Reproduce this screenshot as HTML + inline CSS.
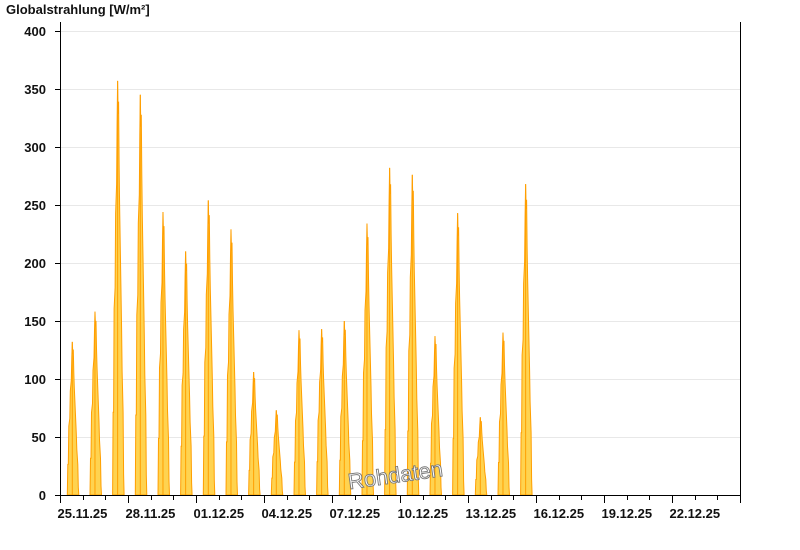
<!DOCTYPE html>
<html><head><meta charset="utf-8"><style>
body{margin:0;width:800px;height:550px;background:#fff;overflow:hidden}
svg{display:block;font-family:"Liberation Sans",Arial,sans-serif}
</style></head><body>
<svg id="s" width="800" height="550" xmlns="http://www.w3.org/2000/svg">
<text x="6" y="14" font-size="13" font-weight="bold" fill="#111">Globalstrahlung [W/m²]</text>
<g id="grid"></g>
<g id="bars"></g>
<line x1="60.5" y1="22" x2="60.5" y2="496" stroke="#000"/>
<line x1="740.5" y1="22" x2="740.5" y2="496" stroke="#000"/>
<line x1="55" y1="495.5" x2="741" y2="495.5" stroke="#000"/>
<g id="ax"></g>
<text x="347" y="482" font-size="22" fill="#fff" stroke="#777" stroke-width="0.9" transform="rotate(-8 400 470)">Rohdaten</text>
</svg>
<script>
var ns="http://www.w3.org/2000/svg";
function el(t,a,p,txt){var e=document.createElementNS(ns,t);for(var k in a)e.setAttribute(k,a[k]);if(txt)e.textContent=txt;document.getElementById(p).appendChild(e);}
function Y(v){return 495-v*464/400;}
for(var v=0;v<=400;v+=50){
 if(v>0)el("line",{x1:61,x2:740,y1:Y(v)+.5,y2:Y(v)+.5,stroke:"#e8e8e8"},"grid");
 el("line",{x1:55,x2:60,y1:Y(v)+.5,y2:Y(v)+.5,stroke:"#000"},"ax");
 el("text",{x:46,y:Y(v)+5,"font-size":13,"font-weight":"bold","text-anchor":"end",fill:"#111"},"ax",""+v);
}
var d=22.667,labs=["25.11.25","28.11.25","01.12.25","04.12.25","07.12.25","10.12.25","13.12.25","16.12.25","19.12.25","22.12.25"];
for(var i=0;i<=30;i++){var x=Math.round(60+i*d)+.5;
 el("line",{x1:x,x2:x,y1:495,y2:i%3==0?503:500,stroke:"#000"},"ax");
 if(i%3==0)el("text",{x:x-3,y:518,"font-size":13,"font-weight":"bold",fill:"#111"},"ax",labs[i/3]);}
var h=[132,158,357,345,244,210,254,229,106,73,142,143,150,234,282,276,137,243,67,140,268];
var prof=[[-6,0],[-5.5,.2],[-5,.2],[-4.5,.45],[-3.5,.5],[-3,.68],[-2,.75],[-1.5,.9],[-1,1],[-.5,.92],[0,.95],[.5,.8],[1,.7],[2,.55],[3,.4],[3.5,.3],[4.5,.2],[5,.05],[5.5,0]];
h.forEach(function(v,i){var c=60+i*d+13.3;var pts=prof.map(function(p){return (c+p[0]).toFixed(1)+","+Y(v*p[1]).toFixed(1)}).join(" ");
 el("polygon",{points:pts+" "+(c+5.5).toFixed(1)+",495 "+(c-6).toFixed(1)+",495",fill:"#ffd350",stroke:"#ff9f00","stroke-width":1},"bars");
 el("line",{x1:c-1,x2:c-1,y1:Y(v),y2:495,stroke:"#ff9f00","stroke-width":1},"bars");});
</script>
</body></html>
